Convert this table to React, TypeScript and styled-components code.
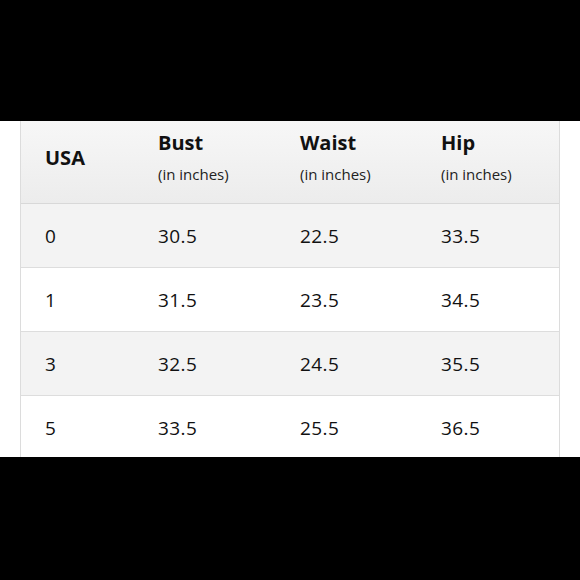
import React from 'react';
import styled, { createGlobalStyle } from 'styled-components';

const GlobalStyle = createGlobalStyle`
    html, body {
        margin: 0;
        padding: 0;
        background: #000;
    }
    body {
        font-family: 'Open Sans', 'Noto Sans', sans-serif;
        color: #111;
    }
`;

const sizes = [
    { usa: '0', bust: '30.5', waist: '22.5', hip: '33.5' },
    { usa: '1', bust: '31.5', waist: '23.5', hip: '34.5' },
    { usa: '3', bust: '32.5', waist: '24.5', hip: '35.5' },
    { usa: '5', bust: '33.5', waist: '25.5', hip: '36.5' }
];

const measures = ['Bust', 'Waist', 'Hip'];

export default function App() {
    return (
        <Page>
            <GlobalStyle />
            <Band $height={121} />
            <Sheet>
                <Table>
                    <HeaderRow>
                        <HeadCell $single>USA</HeadCell>
                        {measures.map((m) => (
                            <HeadCell key={m}>
                                {m}
                                <Unit>(in inches)</Unit>
                            </HeadCell>
                        ))}
                    </HeaderRow>
                    {sizes.map((row, i) => (
                        <Row key={row.usa} $shaded={i % 2 === 0}>
                            <Cell>{row.usa}</Cell>
                            <Cell>{row.bust}</Cell>
                            <Cell>{row.waist}</Cell>
                            <Cell>{row.hip}</Cell>
                        </Row>
                    ))}
                </Table>
            </Sheet>
            <Band $height={123} />
        </Page>
    );
}

const Page = styled.div`
    width: 580px;
    height: 580px;
    display: flex;
    flex-direction: column;
    overflow: hidden;
`;

const Band = styled.div<{ $height: number }>`
    height: ${(p) => p.$height}px;
    flex-shrink: 0;
    background: #000;
`;

const Sheet = styled.div`
    height: 336px;
    flex-shrink: 0;
    background: #fff;
    padding: 0 20px 0 20px;
    overflow: hidden;
`;

const Table = styled.div`
    height: 100%;
    border-left: 1px solid #dcdcdc;
    border-right: 1px solid #dcdcdc;
    box-sizing: border-box;
`;

const columns = '113px 142px 141px 1fr';

const HeaderRow = styled.div`
    display: grid;
    grid-template-columns: ${columns};
    height: 82px;
    border-bottom: 1px solid #d8d8d8;
    background: linear-gradient(#f7f7f7, #ececec);
`;

const HeadCell = styled.div<{ $single?: boolean }>`
    display: flex;
    flex-direction: column;
    padding: ${(p) => (p.$single ? '24px' : '9px')} 0 0 24px;
    font-size: 20px;
    font-weight: 700;
    line-height: 26px;
    color: #111;
`;

const Unit = styled.span`
    margin-top: 8px;
    font-size: 15px;
    font-weight: 400;
    line-height: 20px;
    color: #222;
`;

const Row = styled.div<{ $shaded: boolean }>`
    display: grid;
    grid-template-columns: ${columns};
    height: 63px;
    border-bottom: 1px solid #dddddd;
    background: ${(p) => (p.$shaded ? '#f3f3f3' : '#ffffff')};
`;

const Cell = styled.div`
    display: flex;
    align-items: center;
    padding-left: 24px;
    font-size: 19px;
    letter-spacing: 0.4px;
    color: #111;
`;
